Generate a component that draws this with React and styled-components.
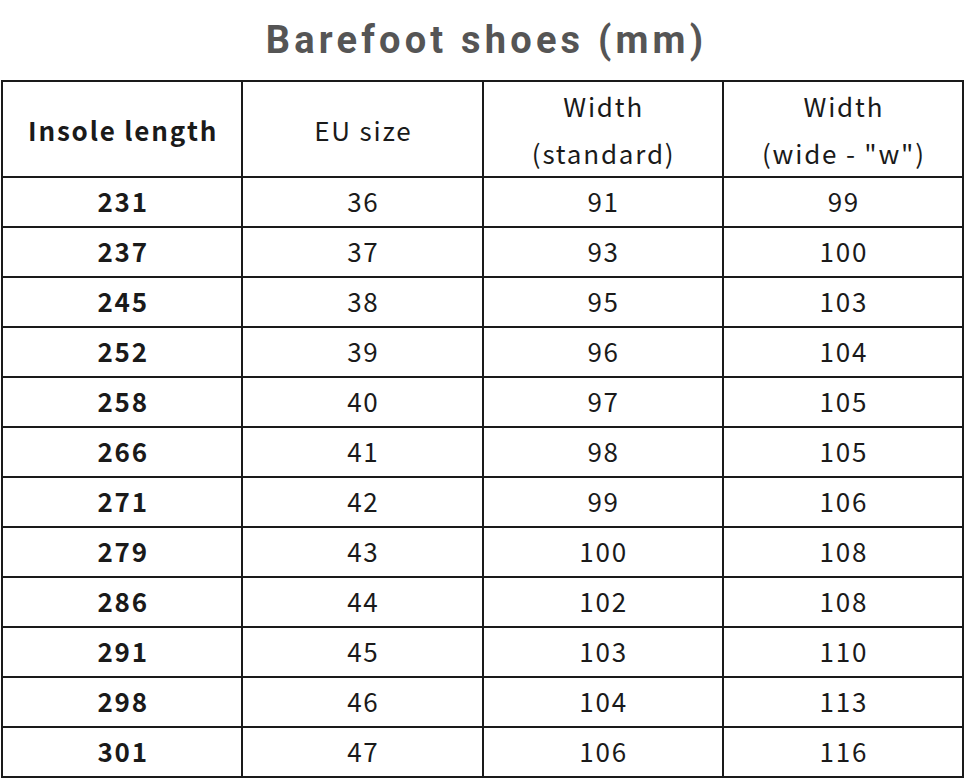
import React from 'react';
import styled, { createGlobalStyle } from 'styled-components';

const GlobalStyle = createGlobalStyle`
  body {
    margin: 0;
    background: #fff;
  }
`;

const Page = styled.div`
  width: 968px;
  padding-left: 1px;
  box-sizing: border-box;
`;

const Title = styled.h2`
  margin: 0;
  height: 80px;
  padding-left: 4px;
  box-sizing: border-box;
  display: flex;
  align-items: center;
  justify-content: center;
  font-family: Roboto, "Liberation Sans", sans-serif;
  font-weight: 700;
  font-size: 38px;
  letter-spacing: 4.2px;
  color: #555;
`;

const Table = styled.table`
  width: 963px;
  border-collapse: collapse;
  table-layout: fixed;
  font-family: "Noto Sans CJK JP", "Noto Sans", sans-serif;
  font-size: 26px;
  letter-spacing: 1.8px;
  color: #1a1a1a;
`;

const Cell = styled.td`
  border: 2px solid #1a1a1a;
  text-align: center;
  vertical-align: middle;
  padding: 0 0 2px 2px;
  box-sizing: border-box;
  height: 50px;
  line-height: 46px;
  font-weight: ${(p) => (p.$bold ? 700 : 400)};
`;

const HeadCell = styled(Cell).attrs({ as: 'th' })`
  height: 96px;
  padding: 0 0 0 2px;
  line-height: 47px;
`;

const rows = [
  [231, 36, 91, 99],
  [237, 37, 93, 100],
  [245, 38, 95, 103],
  [252, 39, 96, 104],
  [258, 40, 97, 105],
  [266, 41, 98, 105],
  [271, 42, 99, 106],
  [279, 43, 100, 108],
  [286, 44, 102, 108],
  [291, 45, 103, 110],
  [298, 46, 104, 113],
  [301, 47, 106, 116],
];

export default function App() {
  return (
    <Page>
      <GlobalStyle />
      <Title>Barefoot shoes (mm)</Title>
      <Table>
        <thead>
          <tr>
            <HeadCell $bold>Insole length</HeadCell>
            <HeadCell>EU size</HeadCell>
            <HeadCell>Width<br />(standard)</HeadCell>
            <HeadCell>Width<br />(wide - "w")</HeadCell>
          </tr>
        </thead>
        <tbody>
          {rows.map((r) => (
            <tr key={r[0]}>
              {r.map((v, i) => (
                <Cell key={i} $bold={i === 0}>{v}</Cell>
              ))}
            </tr>
          ))}
        </tbody>
      </Table>
    </Page>
  );
}
